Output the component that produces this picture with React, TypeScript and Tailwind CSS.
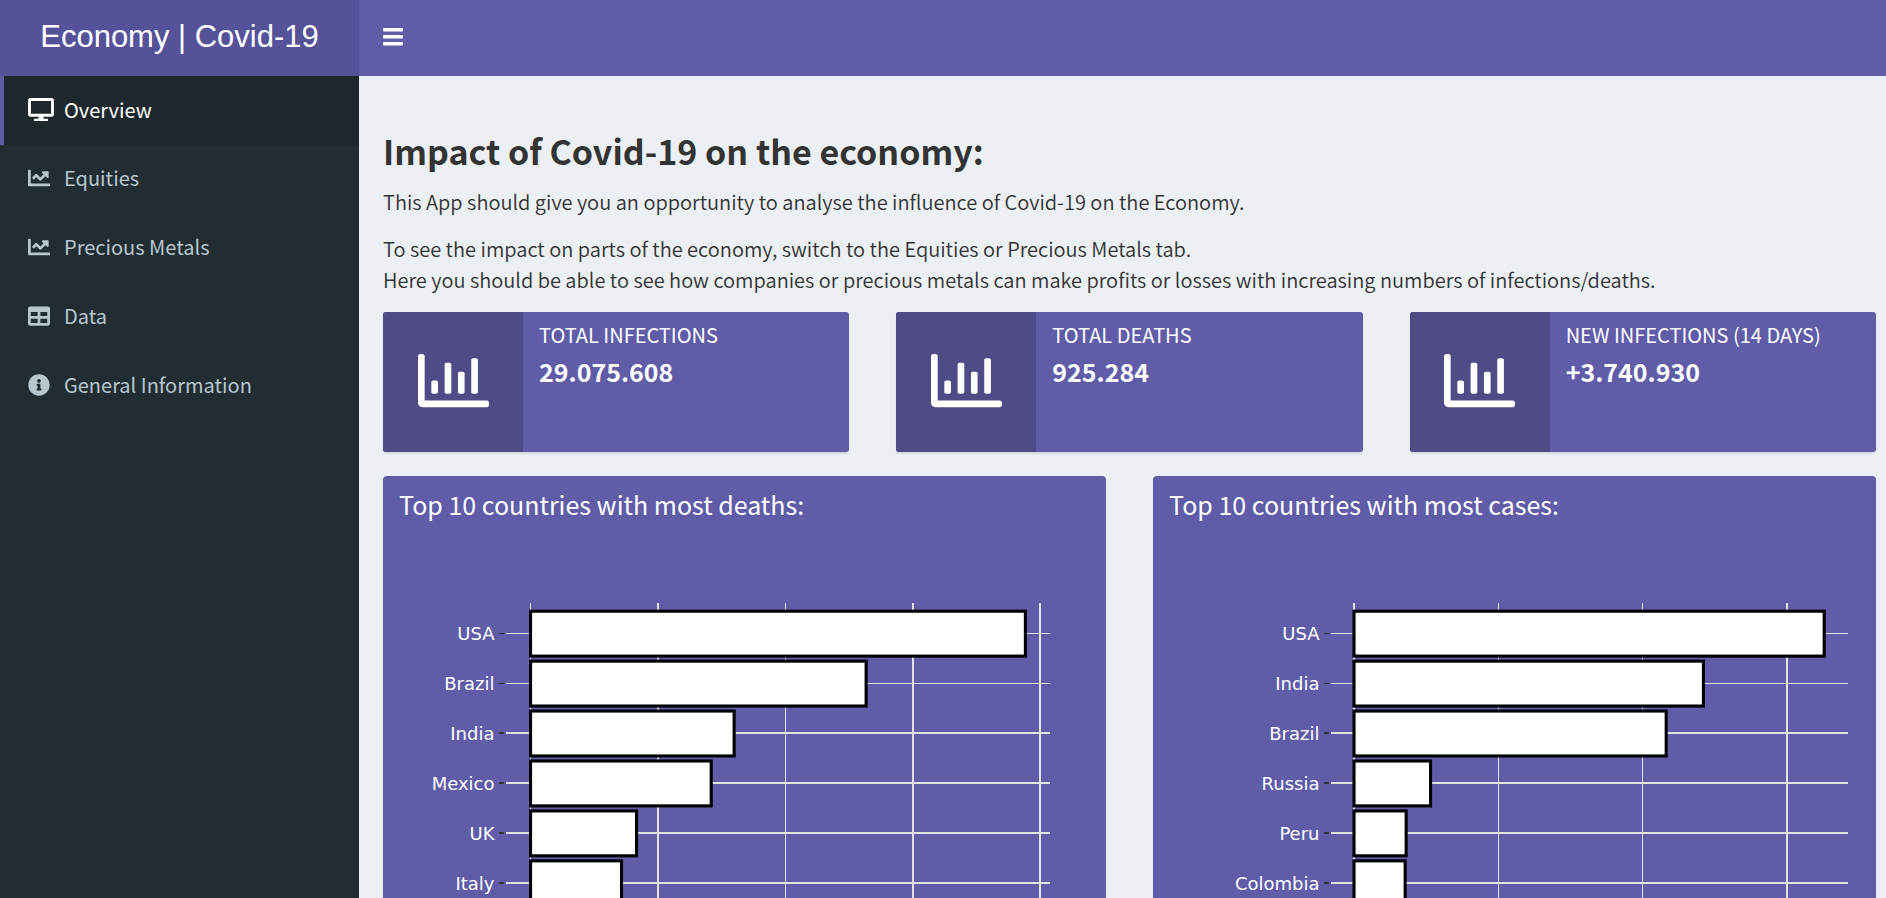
import type { IconType } from "react-icons";
import { FaChartLine, FaDesktop, FaInfoCircle, FaRegChartBar, FaTable } from "react-icons/fa";

type NavItem = { label: string; icon: IconType; active?: boolean };

const navItems: NavItem[] = [
  { label: "Overview", icon: FaDesktop, active: true },
  { label: "Equities", icon: FaChartLine },
  { label: "Precious Metals", icon: FaChartLine },
  { label: "Data", icon: FaTable },
  { label: "General Information", icon: FaInfoCircle },
];

const stats = [
  { label: "Total infections", value: "29.075.608" },
  { label: "Total deaths", value: "925.284" },
  { label: "New infections (14 days)", value: "+3.740.930" },
];

type Chart = {
  title: string;
  rows: [string, number][];
  tickLabels: string[];
  zero: number;
  step: number;
  unit: number;
  left: number;
  right: number;
};

const charts: Chart[] = [
  {
    title: "Top 10 countries with most deaths:",
    rows: [
      ["USA", 194200],
      ["Brazil", 131700],
      ["India", 79900],
      ["Mexico", 70900],
      ["UK", 41600],
      ["Italy", 35700],
      ["France", 30900],
      ["Peru", 30500],
      ["Spain", 29700],
      ["Iran", 23000],
    ],
    tickLabels: ["0", "50000", "100000", "150000", "200000"],
    zero: 147.55,
    step: 127.4,
    unit: 50000,
    left: 123,
    right: 667,
  },
  {
    title: "Top 10 countries with most cases:",
    rows: [
      ["USA", 6517000],
      ["India", 4843000],
      ["Brazil", 4327000],
      ["Russia", 1061000],
      ["Peru", 723000],
      ["Colombia", 709000],
      ["Mexico", 663000],
      ["South Africa", 649000],
      ["Spain", 566000],
      ["Argentina", 546000],
    ],
    tickLabels: ["0", "2000000", "4000000", "6000000"],
    zero: 201,
    step: 144.3,
    unit: 2000000,
    left: 178,
    right: 695,
  },
];

const PLOT_TOP = 73;
const PLOT_BOTTOM = 583;
const ROW_PITCH = 49.93;

function BarChart({ chart }: { chart: Chart }) {
  const { title, rows, tickLabels, zero, step, unit, left, right } = chart;
  return (
    <svg
      viewBox="0 0 723 640"
      className="block w-full"
      role="img"
      aria-label={title}
      fontFamily='"DejaVu Sans", Verdana, sans-serif'
      fontSize="18"
      fill="#fff"
    >
      <g stroke="#e2e2e2" strokeWidth="1.6" shapeRendering="crispEdges">
        {tickLabels.map((t, i) => (
          <line key={t} x1={zero + i * step} x2={zero + i * step} y1={PLOT_TOP} y2={PLOT_BOTTOM} />
        ))}
        {rows.map(([name], i) => {
          const y = 103.4 + i * ROW_PITCH;
          return <line key={name} x1={left} x2={right} y1={y} y2={y} />;
        })}
      </g>
      {rows.map(([name, value], i) => {
        const y = 103.4 + i * ROW_PITCH;
        return (
          <g key={name}>
            <line x1={left - 7} x2={left - 2} y1={y} y2={y} stroke="#333" strokeWidth="1.6" shapeRendering="crispEdges" />
            <rect
              x={zero}
              y={y - 22.2}
              width={(value / unit) * step}
              height="44.9"
              stroke="#000"
              strokeWidth="3.1"
            />
            <text x={left - 11.5} y={y + 6.6} textAnchor="end">
              {name}
            </text>
          </g>
        );
      })}
      {tickLabels.map((t, i) => (
        <text key={t} x={zero + i * step} y={PLOT_BOTTOM + 26} textAnchor="middle">
          {t}
        </text>
      ))}
    </svg>
  );
}

export default function App() {
  return (
    <div className="flex h-screen flex-col overflow-hidden bg-[#ecf0f5] font-['Source_Sans_Pro','Noto_Sans_CJK_SC',sans-serif] text-[20px] text-[#333]">
      <header className="flex h-[76px] shrink-0 bg-[#605ca8] text-white">
        <a
          href="#"
          className="flex w-[359px] shrink-0 items-center justify-center bg-[#555299] pb-0.5 font-['Liberation_Sans',Arial,sans-serif] text-[31px]"
        >
          Economy | Covid-19
        </a>
        <button type="button" aria-label="Toggle navigation" className="flex items-center px-6 pb-0.5">
          <svg viewBox="0 0 20 18" className="h-[18px] w-5" fill="currentColor" aria-hidden="true">
            <rect y="0" width="20" height="3.4" rx="0.8" />
            <rect y="7" width="20" height="3.4" rx="0.8" />
            <rect y="14" width="20" height="3.4" rx="0.8" />
          </svg>
        </button>
      </header>

      <div className="flex min-h-0 flex-1">
        <nav className="w-[359px] shrink-0 bg-[#222d32]">
          <ul>
            {navItems.map(({ label, icon: Icon, active }) => (
              <li key={label}>
                <a
                  href="#"
                  aria-current={active ? "page" : undefined}
                  className={
                    active
                      ? "flex h-[69px] items-center border-l-4 border-[#605ca8] bg-[#1e282c] pb-0.5 pl-6 text-white"
                      : "flex h-[69px] items-center border-l-4 border-transparent pb-1 pl-6 text-[#b8c7ce]"
                  }
                >
                  <span className="w-9">
                    <Icon className={active ? "h-[23px] w-[26px]" : "size-[22px]"} />
                  </span>
                  {label}
                </a>
              </li>
            ))}
          </ul>
        </nav>

        <main className="min-w-0 flex-1 overflow-y-auto pt-[55px] pr-[10px] pb-6 pl-6 [scrollbar-width:none]">
          <h1 className="text-[34px] leading-10 font-bold">Impact of Covid-19 on the economy:</h1>
          <p className="mt-[15px] leading-[31px] font-[350]">
            This App should give you an opportunity to analyse the influence of Covid-19 on the Economy.
          </p>
          <p className="mt-4 leading-[31px] font-[350]">
            To see the impact on parts of the economy, switch to the Equities or Precious Metals tab.
            <br />
            Here you should be able to see how companies or precious metals can make profits or losses with increasing
            numbers of infections/deaths.
          </p>

          <section className="mt-[17px] grid grid-cols-3 gap-[47px]">
            {stats.map(({ label, value }) => (
              <div
                key={label}
                className="flex h-[140px] overflow-hidden rounded-[3px] bg-[#605ca8] text-white shadow-[0_2px_2px_rgba(0,0,0,0.1)]"
              >
                <div className="flex w-[140px] shrink-0 items-center justify-center bg-[#4f4b86] pb-1">
                  <FaRegChartBar className="size-[71px]" />
                </div>
                <div className="px-4 py-[7px]">
                  <div className="leading-8 uppercase">{label}</div>
                  <div className="text-[25px] leading-10 font-bold">{value}</div>
                </div>
              </div>
            ))}
          </section>

          <section className="mt-6 grid grid-cols-2 gap-[47px]">
            {charts.map((chart) => (
              <div
                key={chart.title}
                className="rounded-[4px] bg-[#605ca8] text-white shadow-[0_2px_2px_rgba(0,0,0,0.1)]"
              >
                <h2 className="px-4 pt-[7px] pb-[5px] text-[25px] leading-[42px]">{chart.title}</h2>
                <BarChart chart={chart} />
              </div>
            ))}
          </section>
        </main>
      </div>
    </div>
  );
}
